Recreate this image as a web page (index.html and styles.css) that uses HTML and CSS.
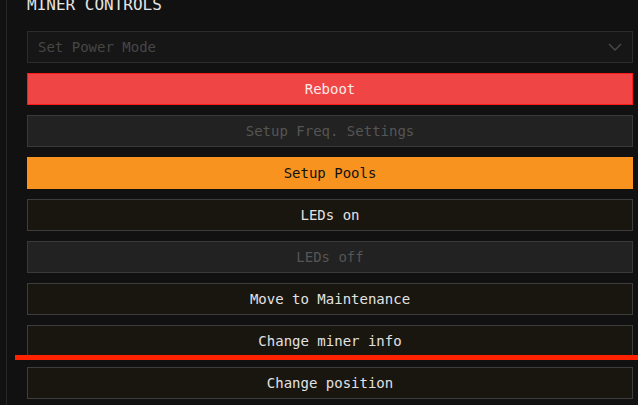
FILE: index.html
```html
<!DOCTYPE html>
<html>
<head>
<meta charset="utf-8">
<link rel="stylesheet" href="styles.css">
</head>
<body>
<div class="panel">
  <h2 class="title">MINER CONTROLS</h2>
  <div class="controls">
    <div class="select">
      <span>Set Power Mode</span>
      <svg class="chev" width="14" height="8" viewBox="0 0 14 8"><path d="M1 1 L7 7 L13 1" fill="none" stroke="#4a4a4a" stroke-width="1.4"/></svg>
    </div>
    <button class="btn btn-red">Reboot</button>
    <button class="btn btn-disabled">Setup Freq. Settings</button>
    <button class="btn btn-orange">Setup Pools</button>
    <button class="btn">LEDs on</button>
    <button class="btn btn-disabled">LEDs off</button>
    <button class="btn">Move to Maintenance</button>
    <button class="btn">Change miner info</button>
    <button class="btn">Change position</button>
  </div>
</div>
<div class="marker"></div>
</body>
</html>
```
FILE: styles.css
```css
html, body {
  margin: 0;
  padding: 0;
  background: #111111;
  height: 100%;
  overflow: hidden;
}
body {
  font-family: "DejaVu Sans Mono", "Liberation Mono", monospace;
  position: relative;
}
.panel {
  margin-left: 6px;
  margin-right: 5px;
  border-left: 1px solid #262626;
  padding-left: 20px;
  min-height: 100%;
}
.title {
  margin: 0;
  position: relative;
  top: -5px;
  height: 20px;
  line-height: 20px;
  font-size: 16px;
  font-weight: normal;
  color: #e4e4e4;
  letter-spacing: 0;
}
.controls {
  display: flex;
  flex-direction: column;
  gap: 10px;
  margin-top: 11px;
}
.select {
  box-sizing: border-box;
  height: 32px;
  background: #161616;
  border: 1px solid #2c2c2c;
  display: flex;
  align-items: center;
  justify-content: space-between;
  padding: 0 10px 0 10px;
  font-size: 14px;
  color: #464646;
}
.chev {
  margin-right: 0px;
}
.btn {
  box-sizing: border-box;
  height: 32px;
  width: 100%;
  background: #19150f;
  border: 1px solid #3d3d3d;
  color: #e2e2e2;
  font-family: inherit;
  font-size: 14px;
  padding: 0;
  text-align: center;
}
.btn-red {
  background: #ef4545;
  border-color: #ff1a1a;
  color: #fbeaea;
}
.btn-disabled {
  background: #222222;
  border-color: #3a3a3a;
  color: #555555;
}
.btn-orange {
  background: #f7931e;
  border-color: #f7931e;
  color: #111111;
}
.marker {
  position: absolute;
  left: 15px;
  right: 0;
  top: 355px;
  height: 5px;
  background: #ff2200;
}
```
